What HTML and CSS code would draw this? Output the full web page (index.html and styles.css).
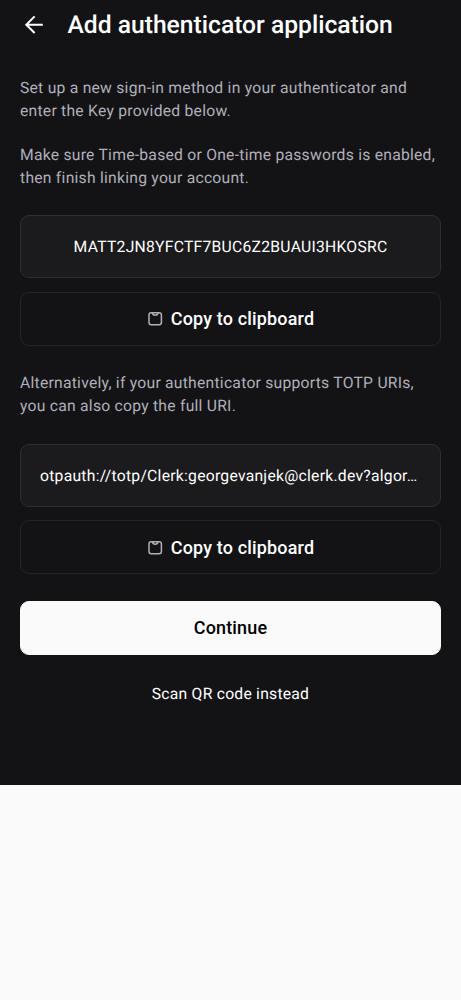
FILE: index.html
```html
<!DOCTYPE html>
<html lang="en">
<head>
<meta charset="utf-8">
<title>Add authenticator application</title>
<link rel="stylesheet" href="styles.css">
</head>
<body>
<main class="screen">
  <header class="header">
    <svg class="back" viewBox="0 0 24 24" fill="none" stroke="currentColor" stroke-width="2"><path d="M20.8 11.7H4.500M12.600 3.400 4.300 11.700l8.300 8.300"/></svg>
    <h1 class="title">Add authenticator application</h1>
  </header>
  <p class="text">Set up a new sign-in method in your authenticator and<br>enter the Key provided below.</p>
  <p class="text">Make sure Time-based or One-time passwords is enabled,<br>then finish linking your account.</p>
  <div class="field">MATT2JN8YFCTF7BUC6Z2BUAUI3HKOSRC</div>
  <button class="button copy"><svg class="clip" viewBox="0 0 16 16" fill="none" stroke="currentColor" stroke-width="1.5"><rect x="2" y="1.700" width="12.4" height="12" rx="2.2"/><path d="M5.400 1.900c.2 1.500 1.200 2.400 2.800 2.400s2.600-.9 2.800-2.400"/></svg><span>Copy to clipboard</span></button>
  <p class="text">Alternatively, if your authenticator supports TOTP URIs,<br>you can also copy the full URI.</p>
  <div class="field uri">otpauth://totp/Clerk:georgevanjek@clerk.dev?algor…</div>
  <button class="button copy"><svg class="clip" viewBox="0 0 16 16" fill="none" stroke="currentColor" stroke-width="1.5"><rect x="2" y="1.700" width="12.4" height="12" rx="2.2"/><path d="M5.400 1.900c.2 1.500 1.200 2.400 2.800 2.400s2.600-.9 2.800-2.400"/></svg><span>Copy to clipboard</span></button>
  <button class="button primary">Continue</button>
  <a class="link">Scan QR code instead</a>
</main>
</body>
</html>
```

FILE: styles.css
```css
* { box-sizing: border-box; }
body { margin: 0; background: #fafafa; font-family: Roboto, sans-serif; text-rendering: geometricPrecision; }
.screen { height: 785px; padding: 0 20px; background: #131316; color: #fff; display: flex; flex-direction: column; }
.header { height: 49px; margin-bottom: 28px; display: flex; align-items: center; gap: 21.5px; }
.back { width: 24px; height: 24px; margin-left: 2px; flex: none; }
.title { margin: 0; padding-top: 2px; font-size: 24.65px; font-weight: 500; line-height: 30px; white-space: nowrap; }
.text { margin: 0 0 22px; color: #b0afba; font-size: 15.7px; line-height: 22.5px; letter-spacing: .245px; white-space: nowrap; }
.field { height: 63px; flex: none; margin-top: 4.4px; padding: 0 19px; border: 1px solid #2f2f32; border-radius: 9px; background: #1b1b1d; display: flex; align-items: center; justify-content: center; font-size: 15.7px; letter-spacing: .26px; white-space: nowrap; }
.uri { justify-content: flex-start; }
.button { width: 100%; height: 54px; flex: none; padding: 1px 0 0; border: 1px solid #242427; border-radius: 9px; display: flex; align-items: center; justify-content: center; gap: 8px; font: 500 17.95px/24px Roboto, sans-serif; letter-spacing: .18px; color: #fff; background: transparent; }
.copy { margin: 13.4px 0 26.7px; }
.clip { width: 16px; height: 16px; color: #b0afba; }
.primary { background: #fafafa; border-color: #fafafa; color: #000; }
.link { margin-top: 27.8px; font-size: 15.7px; line-height: 22px; letter-spacing: .24px; text-align: center; }
```
